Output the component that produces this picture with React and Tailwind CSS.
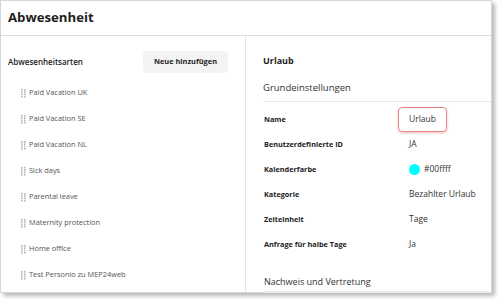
import React from "react";

const types = [
  "Paid Vacation UK",
  "Paid Vacation SE",
  "Paid Vacation NL",
  "Sick days",
  "Parental leave",
  "Maternity protection",
  "Home office",
  "Test Personio zu MEP24web",
];

const settings = [
  { label: "Name", value: "Urlaub", highlight: true },
  { label: "Benutzerdefinierte ID", value: "JA" },
  { label: "Kalenderfarbe", value: "#00ffff", color: true },
  { label: "Kategorie", value: "Bezahlter Urlaub" },
  { label: "Zeiteinheit", value: "Tage" },
  { label: "Anfrage für halbe Tage", value: "Ja" },
];

function Handle() {
  return (
    <svg width="5" height="9" viewBox="0 0 5 9" className="shrink-0">
      {[0, 1].map((c) =>
        [0, 1, 2, 3].map((r) => (
          <rect key={c + "-" + r} x={c * 3} y={r * 2.3} width="1.6" height="1.6" fill="#b5b5b5" />
        ))
      )}
    </svg>
  );
}

export default function App() {
  return (
    <div className="w-[500px] h-[305px] bg-white font-['Open_Sans',sans-serif]">
      <div className="w-[492px] h-[293px] border border-[#d6d6d6] bg-white shadow-[3px_3px_4px_rgba(0,0,0,0.28)] flex flex-col">
        {/* header */}
        <div className="h-[35px] border-b border-[#dedede] flex items-center px-[7px]">
          <h1 className="text-[13.2px] font-bold text-[#1e1e1e]">Abwesenheit</h1>
        </div>

        <div className="flex flex-1 min-h-0">
          {/* left */}
          <div className="w-[245px] border-r border-[#e4e4e4] pl-[7px] pt-[15px]">
            <div className="flex items-center justify-between pr-[17px]">
              <span className="text-[8px] font-semibold text-[#222]">Abwesenheitsarten</span>
              <button className="h-[22px] w-[85px] rounded-[4px] bg-[#f3f3f3] text-[7.4px] font-bold text-[#1e1e1e]">
                Neue hinzufügen
              </button>
            </div>
            <ul className="mt-[7px] pl-[13px]">
              {types.map((t) => (
                <li key={t} className="h-[26px] flex items-center gap-[3px] text-[7.4px] text-[#555]">
                  <Handle />
                  <span>{t}</span>
                </li>
              ))}
            </ul>
          </div>

          {/* right */}
          <div className="flex-1 pl-[17px] pt-[17px]">
            <div className="text-[9px] font-bold text-[#1e1e1e] leading-[16px]">Urlaub</div>
            <div className="mt-[11px] text-[9.5px] text-[#333] leading-[16px] pb-[5px] border-b border-[#e6e6e6]">
              Grundeinstellungen
            </div>
            <div className="pt-[5px]">
              {settings.map((s) => (
                <div key={s.label} className="h-[25px] flex items-center pl-[1px]">
                  <span className="w-[145px] text-[7.3px] font-bold text-[#222]">{s.label}</span>
                  {s.highlight ? (
                    <span className="h-[25px] -ml-[11px] px-[10px] flex items-center rounded-[4px] border-[1.5px] border-[#e88484] shadow-[0_1px_3px_rgba(220,80,80,0.35)] text-[8.5px] text-[#333]">
                      {s.value}
                    </span>
                  ) : s.color ? (
                    <span className="flex items-center gap-[4px] text-[8.5px] text-[#333]">
                      <span className="w-[11px] h-[11px] rounded-full bg-[#00ffff]" />
                      {s.value}
                    </span>
                  ) : (
                    <span className="text-[8.5px] text-[#333]">{s.value}</span>
                  )}
                </div>
              ))}
            </div>
            <div className="mt-[17px] pl-[1px] text-[9px] text-[#333] leading-[16px] pb-[1px] border-b-2 border-[#ececec]">
              Nachweis und Vertretung
            </div>
          </div>
        </div>
      </div>
    </div>
  );
}
